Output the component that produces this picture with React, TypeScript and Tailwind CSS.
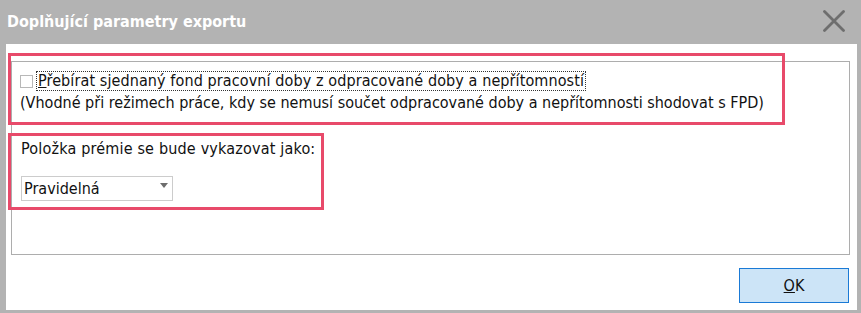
const font = { fontFamily: '"DejaVu Sans Condensed", "DejaVu Sans", sans-serif' }

export default function App() {
  return (
    <div
      className="relative w-[861px] h-[313px] bg-[#b3b3b3] flex flex-col overflow-hidden text-[16px] text-[#111]"
      style={font}
    >
      {/* Title bar */}
      <div className="h-[44px] shrink-0 flex items-center justify-between pl-[7px] pr-[16px]">
        <span className="text-white font-bold text-[16px] mt-[-1px]">Doplňující parametry exportu</span>
        <svg width="22" height="22" viewBox="0 0 22 22" className="mt-[-2px]">
          <path d="M1.5 1.5 L20.5 20.5 M20.5 1.5 L1.5 20.5" stroke="#6e6e6e" strokeWidth="2.8" strokeLinecap="round" />
        </svg>
      </div>

      {/* Body */}
      <div className="flex-1 ml-[6px] mr-[4px] mb-[3px] bg-white flex flex-col pl-[5px] pr-[7px] pt-[17px]">
        <div className="h-[194px] border border-[#adadad] pl-[8px] pt-[9px] flex flex-col">
          <div className="flex items-center h-[20px]">
            <span className="w-[13px] h-[13px] border border-[#b8b8b8] bg-white shrink-0" />
            <span className="ml-[3px] px-[1px] border border-dotted border-[#333] leading-[18px] tracking-[0.1px]">
              <span className="underline">P</span>řebírat sjednaný fond pracovní doby z odpracované doby a nepřítomností
            </span>
          </div>
          <p className="leading-[21px] mt-[1px]">
            (Vhodné při režimech práce, kdy se nemusí součet odpracované doby a nepřítomnosti shodovat s FPD)
          </p>
          <p className="leading-[21px] mt-[25px] ml-[1px] tracking-[0.18px]">Položka prémie se bude vykazovat jako:</p>
          <div className="mt-[17px] ml-[1px] w-[152px] h-[25px] border border-[#cccccc] flex items-center justify-between pl-[2px] pr-[4px]">
            <span>Pravidelná</span>
            <span className="w-0 h-0 border-l-[4px] border-r-[4px] border-t-[5px] border-l-transparent border-r-transparent border-t-[#6d6d6d] mb-[6px]" />
          </div>
        </div>
        <div className="flex justify-end pt-[13px] pr-[1px]">
          <button className="w-[110px] h-[35px] bg-[#cce4f7] border border-[#1a7ad6] flex items-center justify-center text-[16px]">
            <span className="underline">O</span>K
          </button>
        </div>
      </div>

      {/* Annotation highlights */}
      <div className="absolute left-[8px] top-[53px] w-[777px] h-[72px] border-[3px] border-[#e84a6a]" />
      <div className="absolute left-[8px] top-[133px] w-[316px] h-[77px] border-[3px] border-[#e84a6a]" />
    </div>
  )
}
